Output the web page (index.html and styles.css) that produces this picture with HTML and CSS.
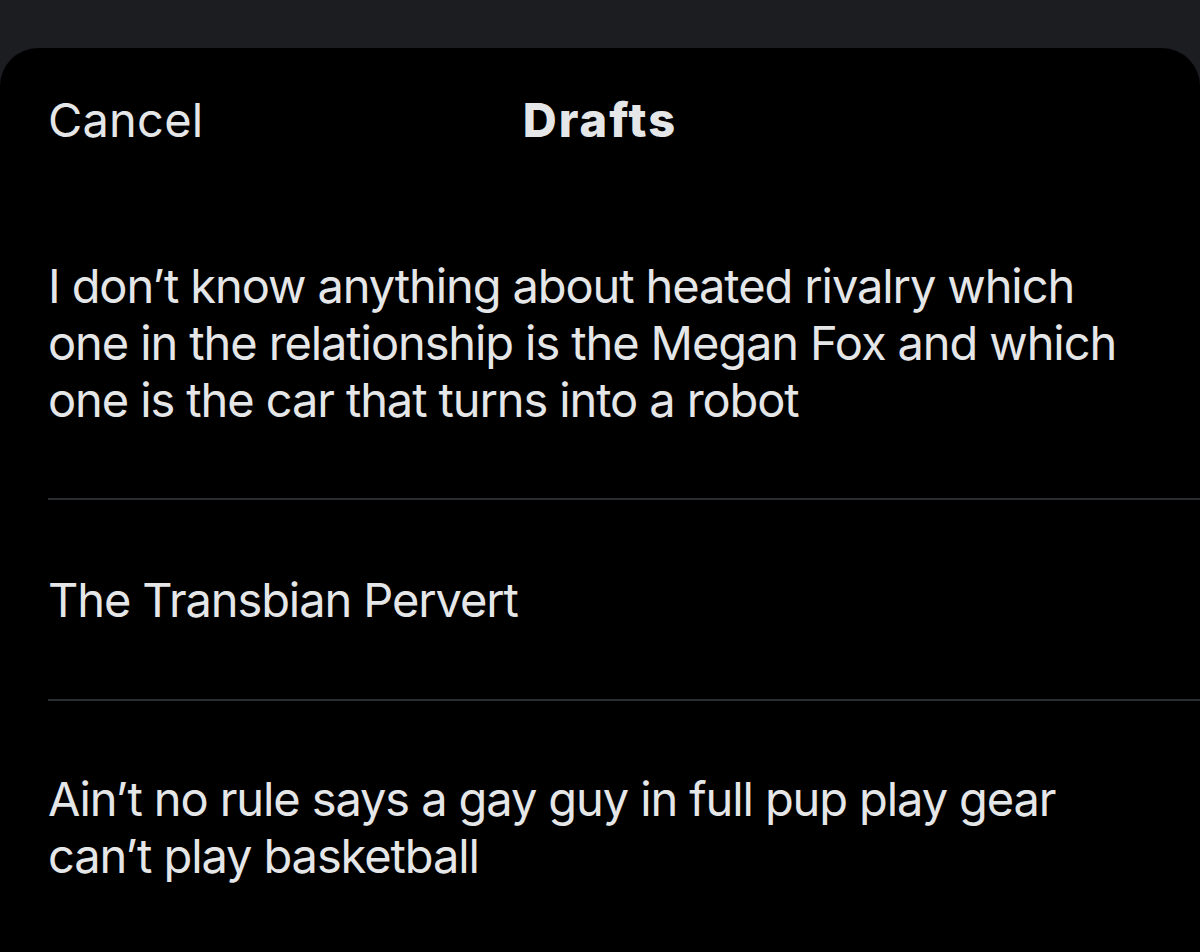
FILE: index.html
```html
<!DOCTYPE html>
<html>
<head>
<meta charset="utf-8">
<link rel="stylesheet" href="styles.css">
</head>
<body>
<div class="topbar"></div>
<div class="sheet">
  <div class="header">
    <span class="cancel">Cancel</span>
    <span class="title">Drafts</span>
  </div>
  <ul class="drafts">
    <li class="draft first">I don’t know anything about heated rivalry which one in the relationship is the Megan Fox and which one is the car that turns into a robot</li>
    <li class="draft">The Transbian Pervert</li>
    <li class="draft last">Ain’t no rule says a gay guy in full pup play gear can’t play basketball</li>
  </ul>
</div>
</body>
</html>
```
FILE: styles.css
```css
html, body {
  margin: 0;
  padding: 0;
  background: #1c1d21;
  height: 100%;
  overflow: hidden;
}
body {
  font-family: Inter, "Noto Sans", sans-serif;
  color: #e5e6e7;
  display: flex;
  flex-direction: column;
}
.topbar {
  height: 48px;
  flex: none;
}
.sheet {
  flex: 1;
  background: #000;
  border-radius: 38px 38px 0 0;
}
.header {
  position: relative;
  display: flex;
  align-items: center;
  height: 138px;
  padding: 5px 48px 0;
  box-sizing: border-box;
}
.cancel {
  font-size: 47px;
  letter-spacing: 0.2px;
}
.title {
  position: absolute;
  left: 0;
  right: 0;
  text-align: center;
  font-size: 47px;
  font-weight: 800;
  letter-spacing: 2px;
  pointer-events: none;
}
.drafts {
  list-style: none;
  margin: 0;
  padding: 0 0 0 48px;
}
.draft {
  font-size: 47px;
  line-height: 57px;
  letter-spacing: -1.1px;
  padding: 71px 60px 71px 0;
  border-bottom: 2px solid #2a2d30;
}
.draft.first {
  padding-bottom: 70px;
}
.draft.last {
  padding-top: 70px;
  line-height: 56.5px;
  border-bottom: none;
}
```
